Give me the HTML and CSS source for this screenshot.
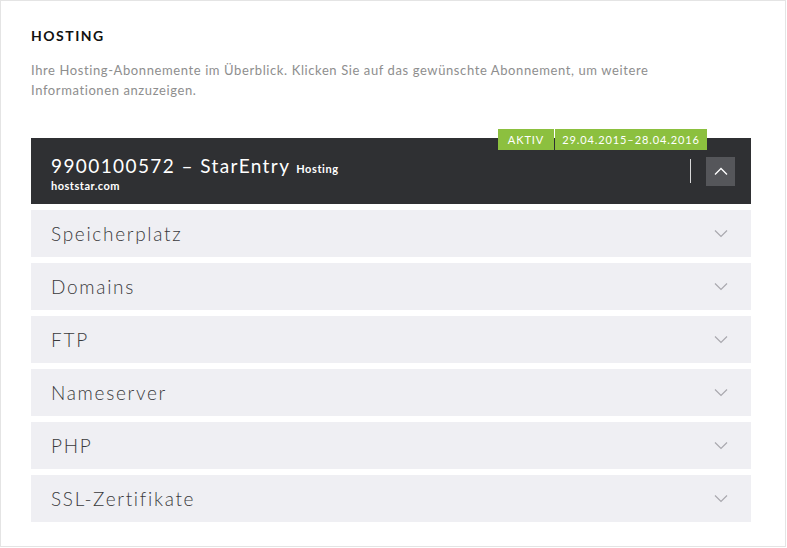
FILE: index.html
```html
<!DOCTYPE html>
<html lang="de">
<head>
    <meta charset="UTF-8">
    <meta name="viewport" content="width=device-width, initial-scale=1.0">
    <title>Hosting</title>
    <link rel="stylesheet" href="styles.css">
</head>
<body>
    <div class="frame">
        <h2 class="section-title">Hosting</h2>
        <p class="intro">Ihre Hosting-Abonnemente im Überblick. Klicken Sie auf das gewünschte Abonnement, um weitere<br>Informationen anzuzeigen.</p>

        <div class="subscription">
            <div class="badges">
                <span class="badge badge-status">Aktiv</span>
                <span class="badge badge-period">29.04.2015–28.04.2016</span>
            </div>

            <div class="sub-header">
                <div class="sub-title">
                    <div class="sub-name">9900100572 – StarEntry <small>Hosting</small></div>
                    <div class="sub-domain">hoststar.com</div>
                </div>
                <div class="sub-actions">
                    <span class="divider"></span>
                    <button class="toggle" aria-label="Zuklappen">
                        <svg width="14" height="8" viewBox="0 0 14 8"><polyline points="1,7.5 7,1.5 13,7.5" fill="none" stroke="#ffffff" stroke-width="1.3"/></svg>
                    </button>
                </div>
            </div>

            <div class="details">
                <div class="detail-row"><span>Speicherplatz</span><svg class="chevron" width="14" height="8" viewBox="0 0 14 8"><polyline points="1,0.5 7,6.5 13,0.5"/></svg></div>
                <div class="detail-row"><span>Domains</span><svg class="chevron" width="14" height="8" viewBox="0 0 14 8"><polyline points="1,0.5 7,6.5 13,0.5"/></svg></div>
                <div class="detail-row"><span>FTP</span><svg class="chevron" width="14" height="8" viewBox="0 0 14 8"><polyline points="1,0.5 7,6.5 13,0.5"/></svg></div>
                <div class="detail-row"><span>Nameserver</span><svg class="chevron" width="14" height="8" viewBox="0 0 14 8"><polyline points="1,0.5 7,6.5 13,0.5"/></svg></div>
                <div class="detail-row"><span>PHP</span><svg class="chevron" width="14" height="8" viewBox="0 0 14 8"><polyline points="1,0.5 7,6.5 13,0.5"/></svg></div>
                <div class="detail-row"><span>SSL-Zertifikate</span><svg class="chevron" width="14" height="8" viewBox="0 0 14 8"><polyline points="1,0.5 7,6.5 13,0.5"/></svg></div>
            </div>
        </div>
    </div>
</body>
</html>
```

FILE: styles.css
```css
body {
    margin: 0;
    font-family: 'Lato', 'Noto Sans', sans-serif;
    background: #ffffff;
}

.frame {
    box-sizing: border-box;
    width: 786px;
    height: 547px;
    border: 1px solid #e4e4e4;
    padding: 27px 34px 0 30px;
}

.section-title {
    margin: 0;
    font-size: 14px;
    line-height: 16px;
    font-weight: 700;
    letter-spacing: 1.5px;
    text-transform: uppercase;
    color: #111111;
}

.intro {
    margin: 16px 0 0;
    font-size: 13px;
    line-height: 20px;
    color: #8e8e8e;
    letter-spacing: 0.6px;
}

.subscription {
    position: relative;
    margin-top: 38px;
}

.badges {
    position: absolute;
    top: -9px;
    right: 44px;
    display: flex;
    gap: 1px;
}

.badge {
    height: 21px;
    line-height: 21px;
    background: #8cc03f;
    color: #ffffff;
    font-size: 11px;
    letter-spacing: 0.9px;
    text-align: center;
    text-transform: uppercase;
}

.badge-status {
    width: 56px;
}

.badge-period {
    width: 152px;
}

.sub-header {
    display: flex;
    justify-content: space-between;
    align-items: center;
    height: 66px;
    box-sizing: border-box;
    padding: 0 16px 0 20px;
    background: #2f3033;
    color: #ffffff;
}

.sub-title {
    padding-top: 5px;
}

.sub-name {
    font-size: 19px;
    line-height: 22px;
    letter-spacing: 1.4px;
}

.sub-name small {
    font-size: 11px;
    font-weight: 700;
    letter-spacing: 0.6px;
}

.sub-domain {
    font-size: 11px;
    line-height: 12px;
    font-weight: 700;
    letter-spacing: 0.5px;
}

.sub-actions {
    display: flex;
    align-items: center;
    gap: 15px;
}

.divider {
    width: 1px;
    height: 24px;
    background: #d8d8d8;
}

.toggle {
    display: flex;
    align-items: center;
    justify-content: center;
    width: 29px;
    height: 29px;
    padding: 0;
    border: none;
    background: #55565a;
    cursor: pointer;
}

.details {
    display: flex;
    flex-direction: column;
    gap: 6px;
    margin-top: 6px;
}

.detail-row {
    display: flex;
    justify-content: space-between;
    align-items: center;
    height: 47px;
    padding: 0 23px 0 20px;
    background: #efeff3;
    color: #3a3a3c;
    font-size: 19px;
    font-weight: 300;
    letter-spacing: 1.7px;
}

.chevron polyline {
    fill: none;
    stroke: #a9a8ae;
    stroke-width: 1.2;
}
```
